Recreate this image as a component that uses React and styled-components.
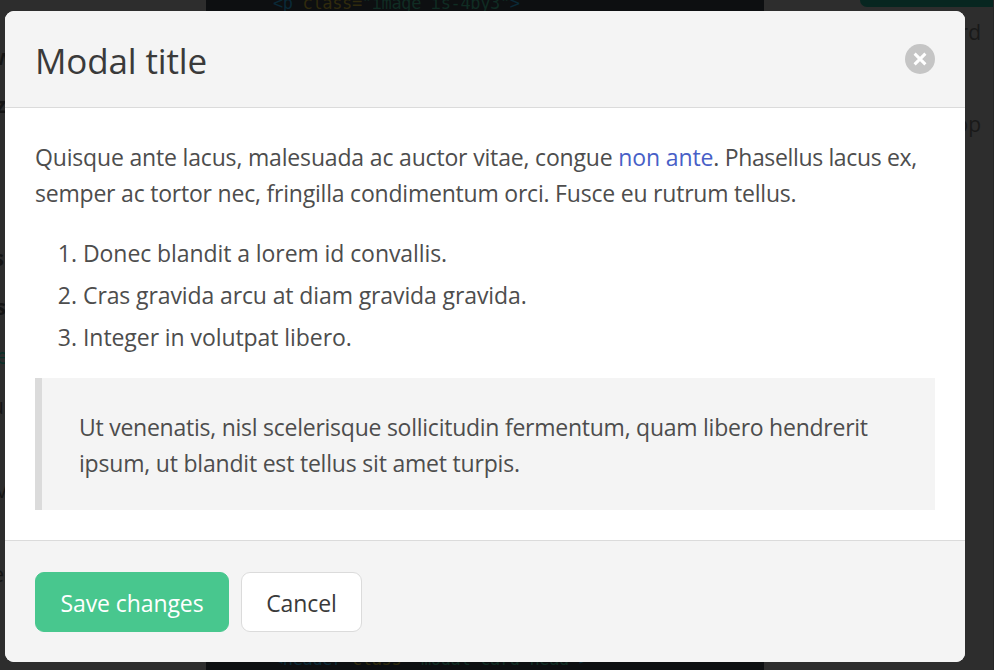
import React from "react";
import styled, { createGlobalStyle } from "styled-components";

const GlobalStyle = createGlobalStyle`
  *, *::before, *::after { box-sizing: border-box; }
  body {
    margin: 0;
    overflow: hidden;
    background: #2d2d2d;
    color: #4d4d4d;
    font: 400 23px/36px "Open Sans", "Noto Sans", sans-serif;
  }
  p, h1, ol, blockquote, pre { margin: 0; padding: 0; }
`;

const Screen = styled.div`
  position: relative;
  height: 670px;
  overflow: hidden;
`;

const Backdrop = styled.div`
  display: grid;
  grid-template-columns: 206px 558px 230px;
  height: 670px;
`;

const Outline = styled.div`
  position: relative;
  overflow: hidden;
`;

const OutlineText = styled.span`
  position: absolute;
  top: ${(p) => p.$top}px;
  right: ${(p) => p.$right}px;
  color: ${(p) => p.$color || "#151515"};
  font-size: 21px;
  line-height: 30px;
  font-weight: ${(p) => (p.$bold ? 700 : 400)};
`;

const CodePanel = styled.div`
  display: flex;
  flex-direction: column;
  justify-content: space-between;
  background: #0d0f11;
  padding-left: 67px;
`;

const CodeLine = styled.pre`
  font: 17px/24px "DejaVu Sans Mono", monospace;
  letter-spacing: -0.37px;
  margin: ${(p) => p.$margin};
`;

const Code = styled.span`
  color: ${(p) => p.$color};
`;

const Sidebar = styled.div`
  display: flex;
  flex-direction: column;
  padding-left: 96px;
  border-right: 1px solid #262626;
`;

const SidebarButton = styled.div`
  height: 7px;
  flex: none;
  background: #072620;
  border-bottom-left-radius: 8px;
`;

const SidebarText = styled.span`
  width: 121px;
  margin-top: ${(p) => p.$gap}px;
  color: #191919;
  font-size: 21px;
  line-height: 30px;
  text-align: right;
`;

const Card = styled.section`
  position: absolute;
  top: 11px;
  left: 5px;
  display: flex;
  flex-direction: column;
  width: 960px;
  height: 651px;
  overflow: hidden;
  border-radius: 9px;
  background: #fff;
`;

const Head = styled.header`
  display: flex;
  flex: none;
  align-items: center;
  justify-content: space-between;
  height: 97px;
  padding: 0 30px;
  border-bottom: 1px solid #dbdbdb;
  background: #f4f4f4;
`;

const Title = styled.h1`
  color: #3a3a3a;
  padding-top: 3px;
  font-size: 35px;
  font-weight: 400;
  line-height: 36px;
  letter-spacing: -0.15px;
`;

const CloseButton = styled.button`
  display: flex;
  width: 30px;
  height: 30px;
  padding: 0;
  border: 0;
  border-radius: 50%;
  background: #c5c5c5;
`;

const Body = styled.div`
  flex: 1;
  padding: 30px;
`;

const Line = styled.span`
  display: block;
  white-space: pre;
  letter-spacing: ${(p) => p.$tracking}px;
`;

const Link = styled.a`
  color: #485fc7;
  letter-spacing: -0.13px;
`;

const Tail = styled.span`
  letter-spacing: -0.35px;
`;

const Paragraph = styled.p`
  padding-top: 1px;
  margin-bottom: 23px;
`;

const List = styled.ol`
  display: flex;
  flex-direction: column;
  gap: 6px;
  margin-bottom: 23px;
  padding-top: 1px;
  list-style: none;
`;

const ListItem = styled.li`
  display: flex;
`;

const Marker = styled.span`
  width: 48px;
  padding-right: 6px;
  text-align: right;
`;

const Quote = styled.blockquote`
  height: 132px;
  padding: 31px 36px 0 37px;
  border-left: 7px solid #dbdbdb;
  background: #f4f4f4;
`;

const Foot = styled.footer`
  display: flex;
  flex: none;
  gap: 12px;
  height: 122px;
  padding: 31px 30px 0;
  border-top: 1px solid #dbdbdb;
  background: #f4f4f4;
`;

const Button = styled.button`
  width: ${(p) => p.$width}px;
  height: 60px;
  padding: 2px 0 0;
  border: 1px solid ${(p) => (p.$primary ? "#48c78e" : "#dbdbdb")};
  border-radius: 9px;
  background: ${(p) => (p.$primary ? "#48c78e" : "#fff")};
  color: ${(p) => (p.$primary ? "#fff" : "#3a3a3a")};
  font: inherit;
  letter-spacing: -0.08px;
`;

const outline = [
  { text: "Overview", top: 42, right: 193, bold: true },
  { text: "Quiz", top: 90, right: 200, bold: true },
  { text: "Columns", top: 243, right: 202, bold: true },
  { text: "Elements", top: 292, right: 200, bold: true },
  { text: "Image", top: 341, right: 198, color: "#0a3029" },
  { text: "Menu", top: 391, right: 202 },
  { text: "Nav", top: 475, right: 199 },
  { text: "Table", top: 559, right: 202 },
];

const items = [
  { text: "Donec blandit a lorem id convallis.", tracking: -0.08 },
  { text: "Cras gravida arcu at diam gravida gravida.", tracking: -0.11 },
  { text: "Integer in volutpat libero.", tracking: -0.07 },
];

function CodeTag({ tag, value, margin }) {
  return (
    <CodeLine $margin={margin}>
      <Code $color="#0a2937">{`<${tag} `}</Code>
      <Code $color="#302a0d">class=</Code>
      <Code $color="#102c23">{`"${value}"`}</Code>
      <Code $color="#0a2937">{">"}</Code>
    </CodeLine>
  );
}

export default function App() {
  return (
    <Screen>
      <GlobalStyle />
      <Backdrop>
        <Outline>
          {outline.map((o) => (
            <OutlineText key={o.text} $top={o.top} $right={o.right} $bold={o.bold} $color={o.color}>
              {o.text}
            </OutlineText>
          ))}
        </Outline>
        <CodePanel>
          <CodeTag tag="p" value="image is-4by3" margin="-9px 0 0" />
          <CodeTag tag="header" value="modal-card-head" margin="0 0 -1px" />
        </CodePanel>
        <Sidebar>
          <SidebarButton />
          <SidebarText $gap={10}>Modal card</SidebarText>
          <SidebarText $gap={62}>Back to top</SidebarText>
        </Sidebar>
      </Backdrop>

      <Card role="dialog" aria-modal="true">
        <Head>
          <Title>Modal title</Title>
          <CloseButton aria-label="close">
            <svg width="30" height="30" viewBox="0 0 30 30">
              <path d="M9.6 9.6l10.8 10.8M20.4 9.6L9.6 20.4" stroke="#fff" strokeWidth="3" />
            </svg>
          </CloseButton>
        </Head>
        <Body>
          <Paragraph>
            <Line $tracking={-0.17}>
              {"Quisque ante lacus, malesuada ac auctor vitae, congue "}
              <Link>non ante</Link>
              <Tail>. Phasellus lacus ex,</Tail>
            </Line>
            <Line $tracking={-0.21}>
              semper ac tortor nec, fringilla condimentum orci. Fusce eu rutrum tellus.
            </Line>
          </Paragraph>
          <List>
            {items.map((item, i) => (
              <ListItem key={item.text}>
                <Marker>{i + 1}.</Marker>
                <Line $tracking={item.tracking}>{item.text}</Line>
              </ListItem>
            ))}
          </List>
          <Quote>
            <Line $tracking={-0.25}>
              Ut venenatis, nisl scelerisque sollicitudin fermentum, quam libero hendrerit
            </Line>
            <Line $tracking={-0.2}>ipsum, ut blandit est tellus sit amet turpis.</Line>
          </Quote>
        </Body>
        <Foot>
          <Button $primary $width={194}>Save changes</Button>
          <Button $width={121}>Cancel</Button>
        </Foot>
      </Card>
    </Screen>
  );
}
